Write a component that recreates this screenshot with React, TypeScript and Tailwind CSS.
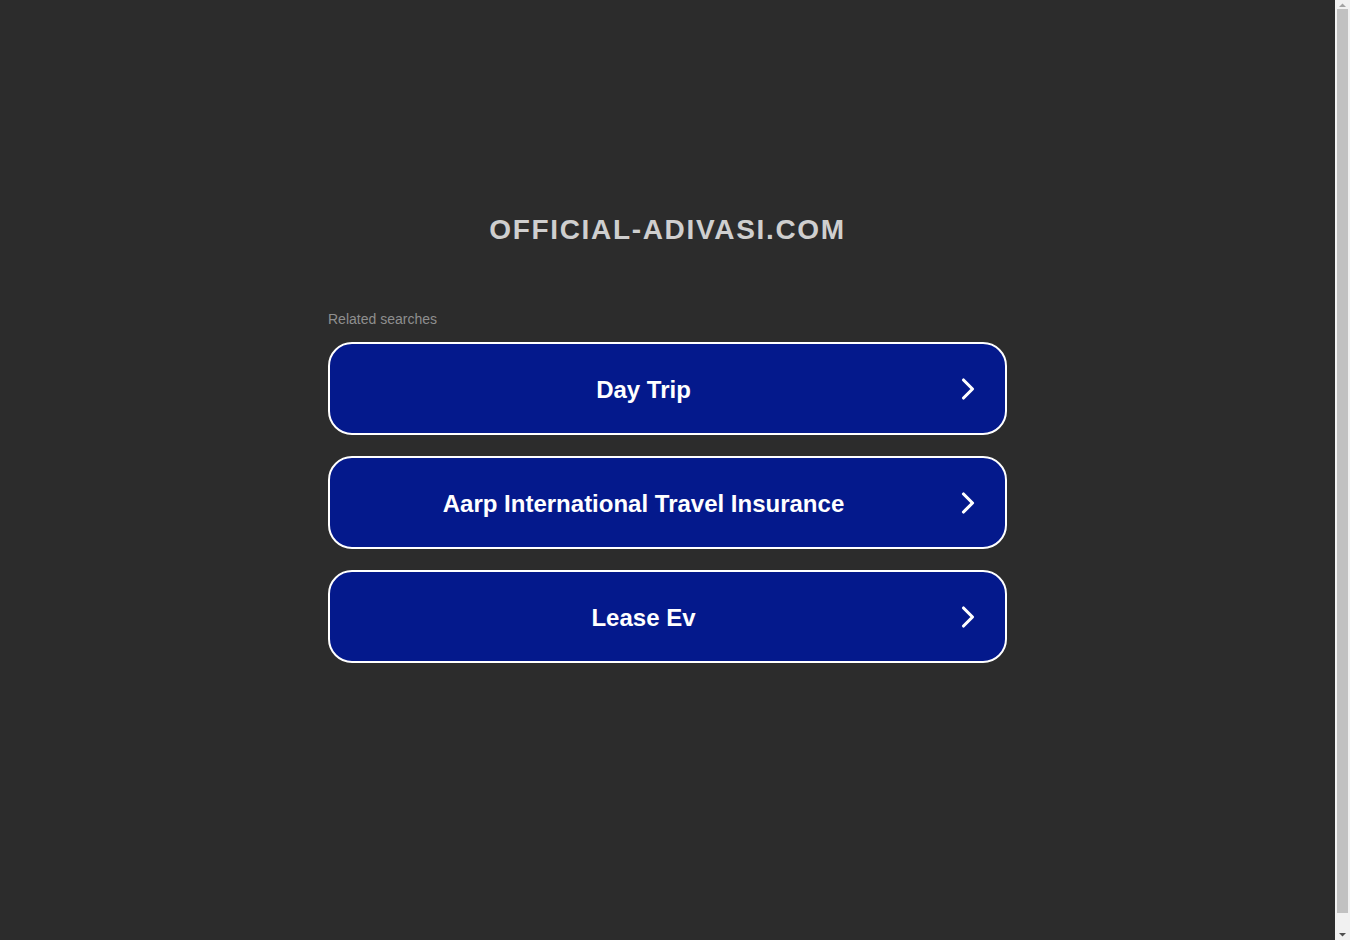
import { ChevronRight } from "lucide-react";

const SEARCHES = ["Day Trip", "Aarp International Travel Insurance", "Lease Ev"];

// Parked-domain style landing: domain title, then a stack of related-search buttons.
export default function App() {
  return (
    <div
      className="flex h-[940px] w-full overflow-hidden bg-[#2c2c2c]"
      style={{ fontFamily: '"Liberation Sans", Arial, sans-serif' }}
    >
      <main className="flex flex-1 flex-col items-center">
        <h1 className="mt-[212px] text-[28px] font-bold leading-[36px] tracking-[0.06em] text-[#cfcfcf]">
          OFFICIAL-ADIVASI.COM
        </h1>

        <div className="mt-[63px] flex w-[679px] flex-col">
          <div className="mb-[15px] text-[14px] leading-[16px] text-[#8f8f8f]">Related searches</div>
          <ul className="flex flex-col gap-[21px]">
            {SEARCHES.map((s) => (
              <li key={s}>
                <a
                  href="#"
                  className="relative flex h-[93px] items-center justify-center rounded-[24px] border-2 border-white bg-[#04198c] pr-[48px] pt-[2px] text-[24px] font-bold text-white"
                >
                  {s}
                  <ChevronRight
                    className="absolute right-[19px] top-1/2 -translate-y-1/2"
                    size={36}
                    strokeWidth={2.1}
                  />
                </a>
              </li>
            ))}
          </ul>
        </div>
      </main>

      {/* browser scrollbar */}
      <div className="flex w-[15px] shrink-0 flex-col items-center bg-[#f1f1f1]">
        <svg width="15" height="8" viewBox="0 0 15 8" className="mt-[1px]">
          <path d="M4 6 L7.5 2.5 L11 6 Z" fill="#a3a3a3" />
        </svg>
        <div className="mx-[2px] w-[11px] flex-1 bg-[#c1c1c1]" />
        <div className="h-[18px]" />
        <svg width="15" height="8" viewBox="0 0 15 8" className="mb-[1px]">
          <path d="M4 2 L7.5 5.5 L11 2 Z" fill="#505050" />
        </svg>
      </div>
    </div>
  );
}
